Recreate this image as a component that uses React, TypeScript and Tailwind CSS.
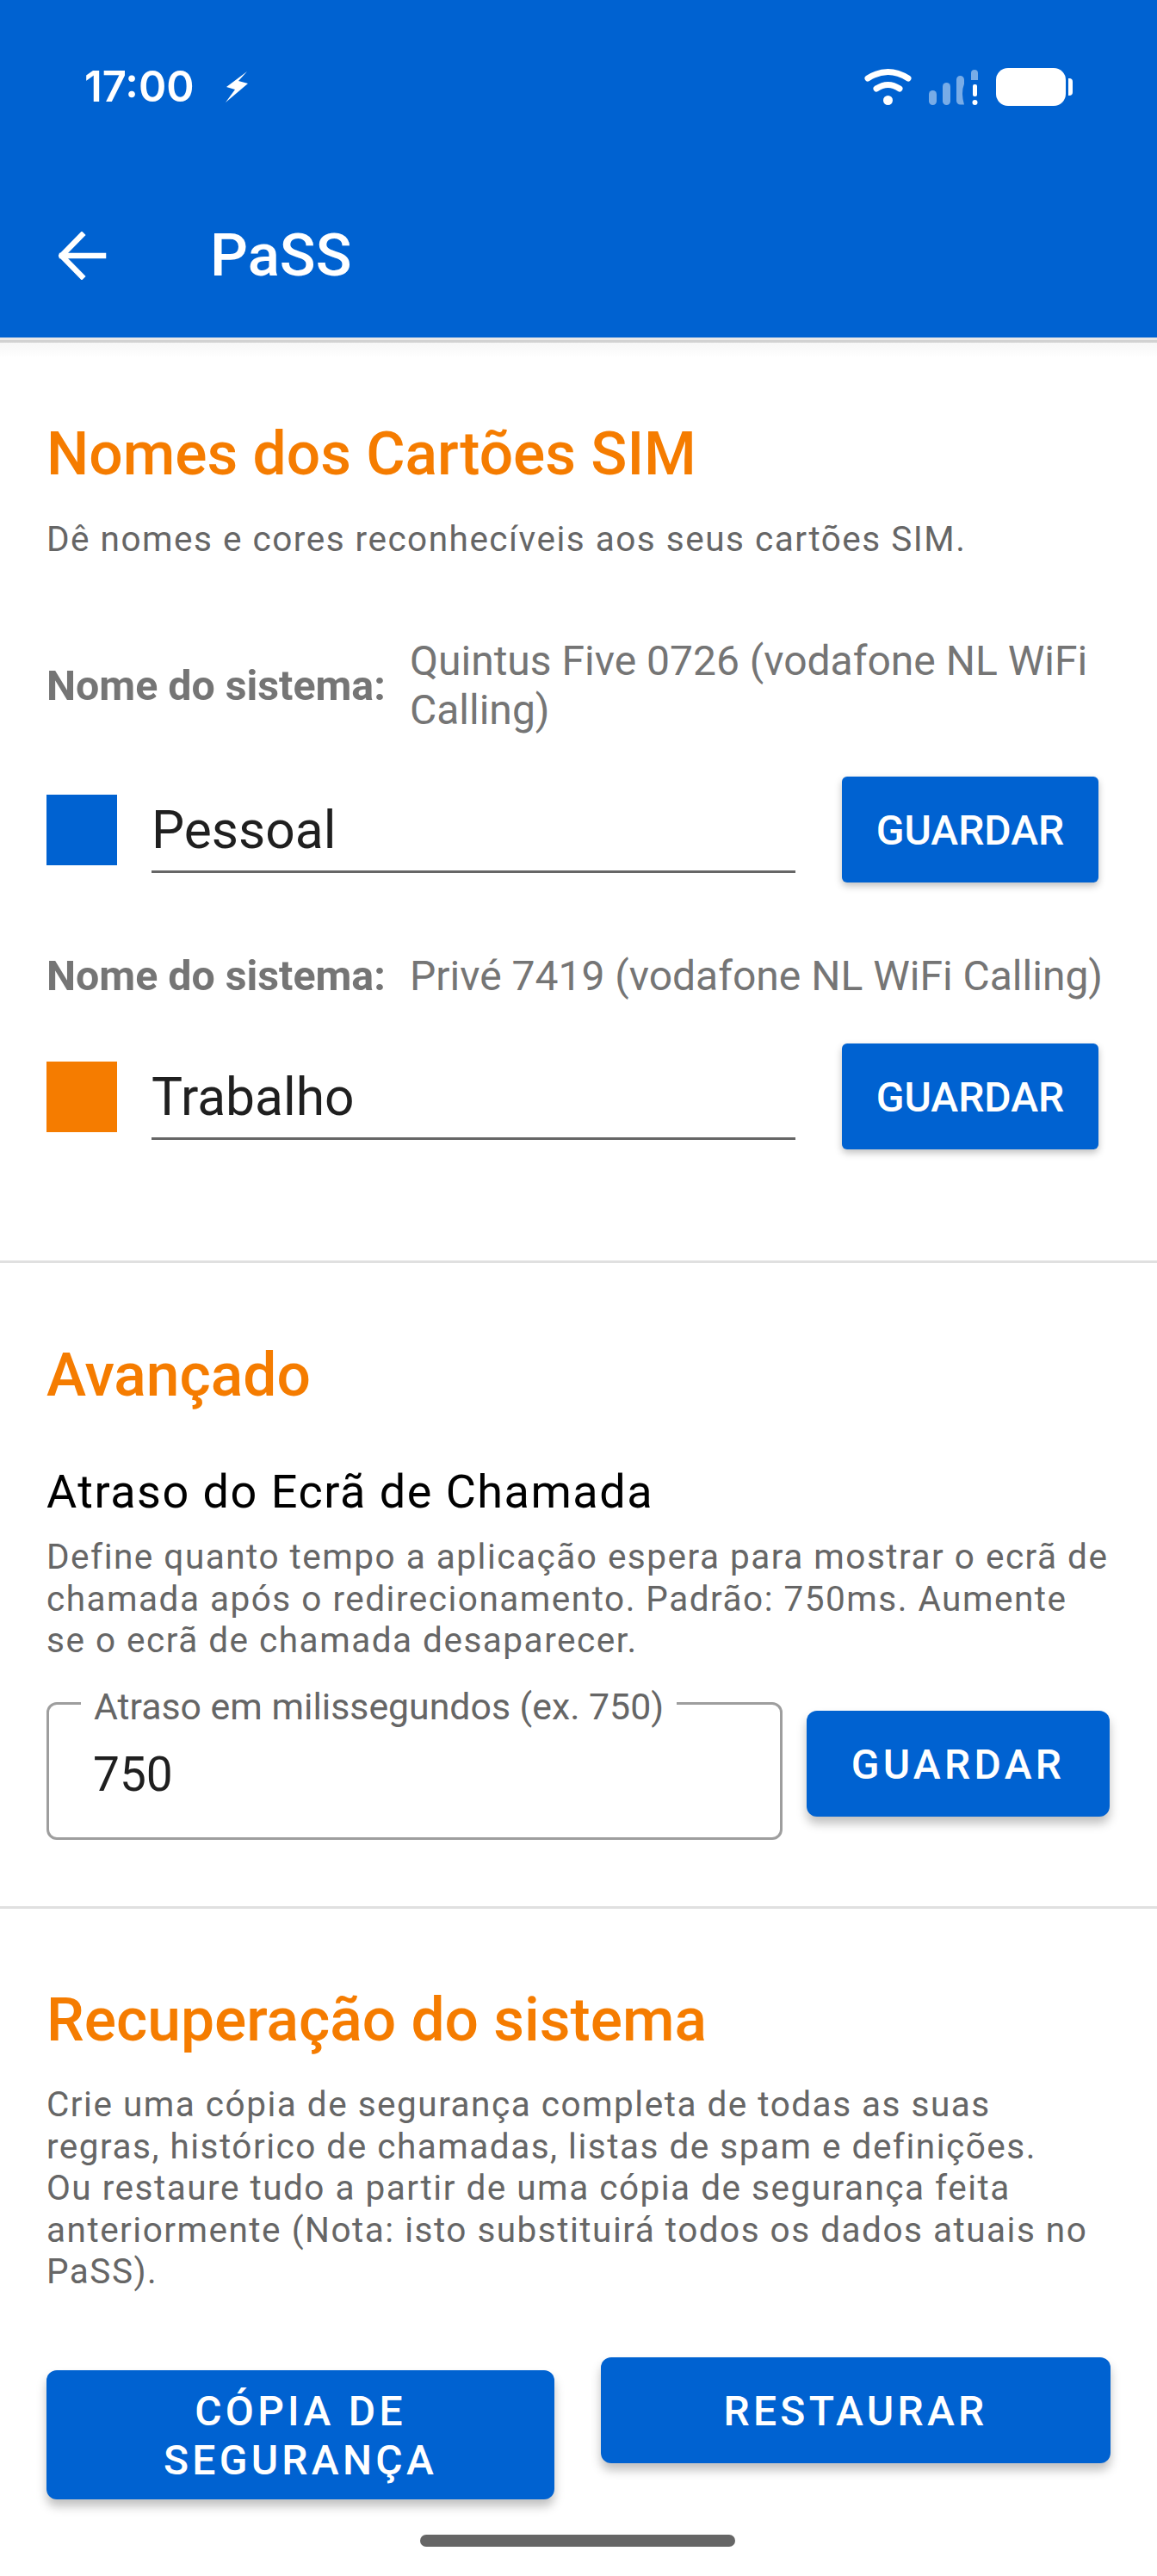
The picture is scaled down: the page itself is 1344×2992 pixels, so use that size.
const BLUE = "bg-[#0062d1]"

function StatusIcons() {
  // wifi, sinal sem dados e bateria, tudo no mesmo desenho
  return (
    <svg width="242" height="44" viewBox="1004 79 242 44" className="block">
      <path d="M1008 91 Q1031.500 76 1055 91" fill="none" stroke="#fff" strokeWidth="7" strokeLinecap="round" />
      <path d="M1018 103 Q1031.500 94 1045 103" fill="none" stroke="#fff" strokeWidth="7" strokeLinecap="round" />
      <circle cx="1031.500" cy="116.500" r="5.500" fill="#fff" />
      <g fill="#fff" fillOpacity="0.47">
        <rect x="1079" y="105" width="9" height="17" rx="4.500" />
        <rect x="1095" y="96" width="9" height="26" rx="4.500" />
        <path d="M1111 92.500 a4.500 4.500 0 0 1 9 0 v5 q-4 10 0 24 h-4.500 a4.500 4.500 0 0 1 -4.500 -4.500 z" />
        <path d="M1128 85 a4 4 0 0 1 8 0 v8 h-8 z" />
      </g>
      <rect x="1130" y="98" width="5" height="14" rx="2" fill="#fff" />
      <circle cx="1132.500" cy="119" r="3" fill="#fff" />
      <rect x="1157" y="79" width="81" height="44" rx="14" fill="#fff" />
      <path d="M1241 91 h1 a4 4 0 0 1 4 4 v12 a4 4 0 0 1 -4 4 h-1 z" fill="#fff" />
    </svg>
  )
}

function Header() {
  return (
    <div>
      <div className={`h-[392px] ${BLUE} flex flex-col text-white`}>
        <div className="flex h-[44px] mt-[79px] pl-[98px] pr-[98px] items-center justify-between">
          <div className="flex items-center">
            <span className="w-[164px] font-['Inter',sans-serif] text-[49px] leading-[44px] font-semibold">17:00</span>
            <svg width="26" height="38" viewBox="0 0 26 38">
              <path d="M25 1 L1 19 L11 22 L0 37 L26 15 L15 12 Z" fill="#fff" />
            </svg>
          </div>
          <StatusIcons />
        </div>
        <div className="flex items-center mt-[137px] pl-[68px]">
          <svg width="56" height="56" viewBox="0 0 56 56" fill="none" stroke="#fff" strokeWidth="6.500" strokeLinecap="square">
            <path d="M4 28 H52" />
            <path d="M27 4 L3.500 28 L27 52" />
          </svg>
          <span className="ml-[120px] text-[69px] leading-[74px] font-medium">PaSS</span>
        </div>
      </div>
      <div className="h-[3px] bg-[#e8e8e8]" />
      <div className="h-[3px] bg-[#d2d2d2]" />
      <div className="h-[18px] bg-gradient-to-b from-[#f7f7f7] to-white" />
    </div>
  )
}

function Heading({ children, className = "" }: { children: React.ReactNode; className?: string }) {
  return <h2 className={`text-[69.500px] leading-[84px] font-medium text-[#f57c00] ${className}`}>{children}</h2>
}

function Body({ children, className = "" }: { children: React.ReactNode; className?: string }) {
  return <p className={`max-w-[1234px] text-[40.500px] leading-[48.500px] tracking-[1.500px] text-[#666666] ${className}`}>{children}</p>
}

function SystemName({ value, className = "" }: { value: React.ReactNode; className?: string }) {
  return (
    <div className={`flex items-center text-[48px] leading-[57px] text-[#757575] ${className}`}>
      <span className="w-[422px] shrink-0 text-[48.300px] font-bold whitespace-nowrap">Nome do sistema:</span>
      <span className="whitespace-nowrap">{value}</span>
    </div>
  )
}

function SimRow({ swatch, name, className = "" }: { swatch: string; name: string; className?: string }) {
  return (
    <div className={`flex items-center ${className}`}>
      <div className={`w-[82px] h-[82px] shrink-0 ${swatch}`} />
      <div className="ml-[40px] w-[748px] h-[84px] self-end mb-[11px] border-b-[3px] border-[#666666] text-[60.500px] leading-[70px] text-[#1f1f1f]">
        {name}
      </div>
      <button className={`ml-[54px] w-[298px] h-[123px] pt-[2px] rounded-[6px] ${BLUE} text-white text-[48px] font-medium shadow-[0_4px_8px_rgba(0,0,0,0.25)]`}>
        GUARDAR
      </button>
    </div>
  )
}

function WideButton({ children, className = "" }: { children: React.ReactNode; className?: string }) {
  return (
    <button className={`pt-[2px] rounded-[12px] ${BLUE} text-white text-[48px] leading-[57px] font-medium tracking-[4.300px] shadow-[0_8px_12px_rgba(0,0,0,0.25)] ${className}`}>
      {children}
    </button>
  )
}

export default function App() {
  return (
    <div className="relative w-[1344px] h-[2992px] bg-white overflow-hidden font-['Roboto',sans-serif]">
      <Header />

      {/* Nomes dos cartões */}
      <section className="px-[54px]">
        <Heading className="mt-[70px]">Nomes dos Cartões SIM</Heading>
        <Body className="mt-[32px]">Dê nomes e cores reconhecíveis aos seus cartões SIM.</Body>
        <SystemName
          className="mt-[88.500px]"
          value={
            <>
              Quintus Five 0726 (vodafone NL WiFi
              <br />
              Calling)
            </>
          }
        />
        <SimRow className="mt-[49px]" swatch={BLUE} name="Pessoal" />
        <SystemName className="mt-[80px]" value="Privé 7419 (vodafone NL WiFi Calling)" />
        <SimRow className="mt-[50px]" swatch="bg-[#f57c00]" name="Trabalho" />
      </section>

      <div className="mt-[129px] h-[3px] bg-[#e0e0e0]" />

      {/* Avançado */}
      <section className="px-[54px]">
        <Heading className="mt-[89px]">Avançado</Heading>
        <h3 className="mt-[63px] text-[54px] leading-[60px] tracking-[1.500px] text-black">Atraso do Ecrã de Chamada</h3>
        <Body className="mt-[21px]">
          Define quanto tempo a aplicação espera para mostrar o ecrã de chamada após o redirecionamento. Padrão: 750ms. Aumente se o ecrã de chamada desaparecer.
        </Body>
        <div className="mt-[47.500px] flex items-start">
          <div className="relative w-[855px] h-[160px] rounded-[12px] border-[3px] border-[#9e9e9e] pl-[51px] pt-[46px] text-[55px] leading-[70px] text-[#1f1f1f]">
            750
            <span className="absolute left-[37px] top-[-22px] px-[15px] bg-white text-[42.800px] leading-[48px] text-[#666666] whitespace-nowrap">
              Atraso em milissegundos (ex. 750)
            </span>
          </div>
          <WideButton className="mt-[10px] ml-[28px] w-[352px] h-[123px]">GUARDAR</WideButton>
        </div>
      </section>

      <div className="mt-[77px] h-[3px] bg-[#e0e0e0]" />

      {/* Recuperação */}
      <section className="px-[54px]">
        <Heading className="mt-[88px]">Recuperação do sistema</Heading>
        <Body className="mt-[31px]">
          Crie uma cópia de segurança completa de todas as suas regras, histórico de chamadas, listas de spam e definições.
          <br />
          Ou restaure tudo a partir de uma cópia de segurança feita anteriormente (Nota: isto substituirá todos os dados atuais no PaSS).
        </Body>
        <div className="mt-[75px] flex items-start gap-[54px]">
          <WideButton className="mt-[15px] w-[590px] h-[150px] px-[40px]">CÓPIA DE SEGURANÇA</WideButton>
          <WideButton className="w-[592px] h-[123px]">RESTAURAR</WideButton>
        </div>
      </section>

      {/* barra de gestos */}
      <div className="absolute left-[488px] top-[2944px] w-[366px] h-[14px] rounded-full bg-[#666666]" />
    </div>
  )
}
